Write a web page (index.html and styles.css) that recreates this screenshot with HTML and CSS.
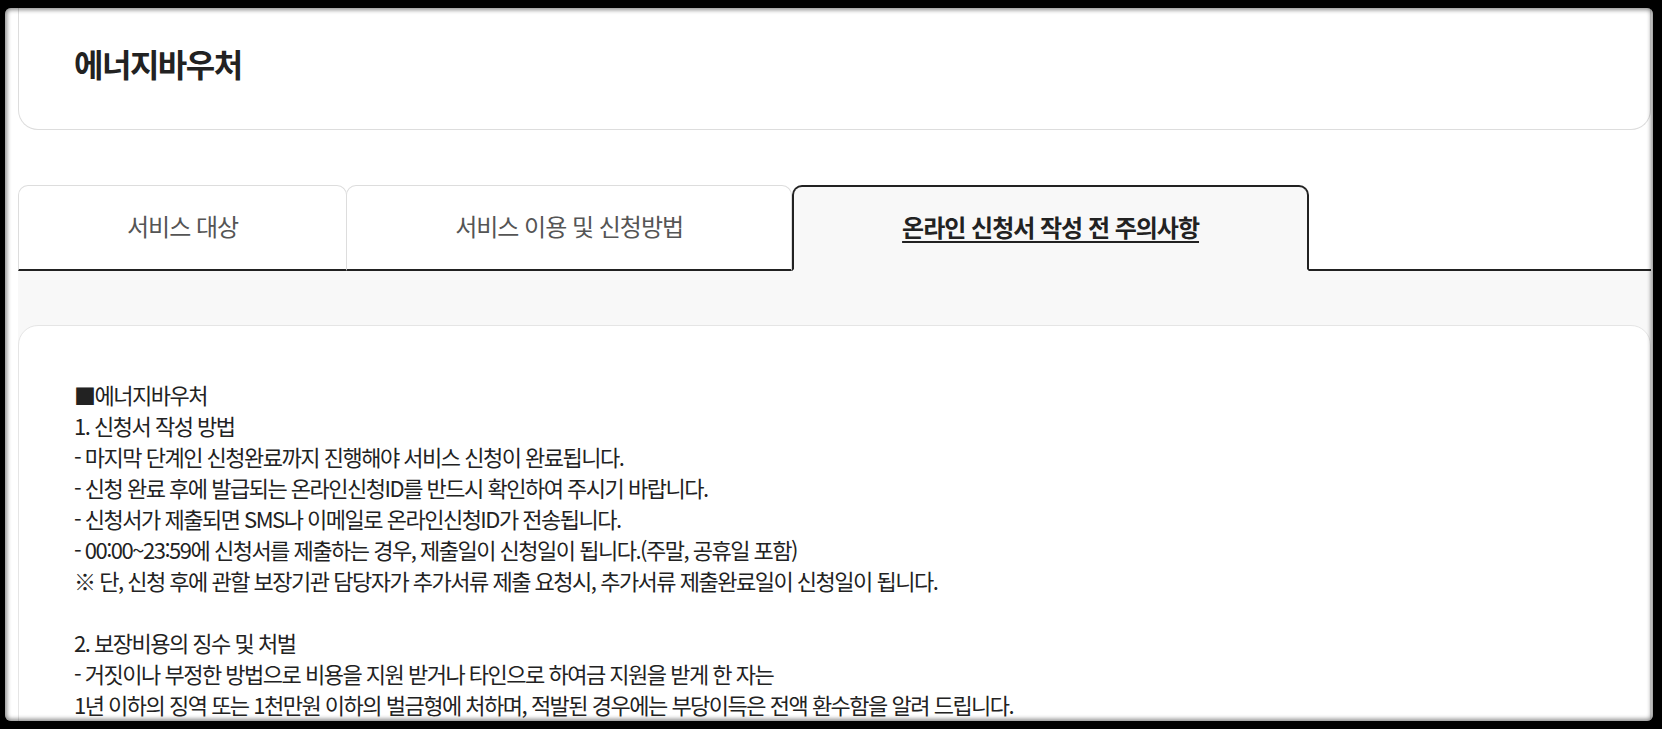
FILE: index.html
```html
<!DOCTYPE html>
<html lang="ko">
<head>
<meta charset="utf-8">
<title>에너지바우처</title>
<link rel="stylesheet" href="styles.css">
</head>
<body>
<div class="page">
  <header class="head-card">
    <h1 class="title">에너지바우처</h1>
  </header>

  <nav class="tabs">
    <div class="tab">서비스 대상</div>
    <div class="tab">서비스 이용 및 신청방법</div>
    <div class="tab active">온라인 신청서 작성 전 주의사항</div>
  </nav>

  <section class="panel">
    <div class="card">
      <p class="block">■에너지바우처<br>
1. 신청서 작성 방법<br>
- 마지막 단계인 신청완료까지 진행해야 서비스 신청이 완료됩니다.<br>
- 신청 완료 후에 발급되는 온라인신청ID를 반드시 확인하여 주시기 바랍니다.<br>
- 신청서가 제출되면 SMS나 이메일로 온라인신청ID가 전송됩니다.<br>
- 00:00~23:59에 신청서를 제출하는 경우, 제출일이 신청일이 됩니다.(주말, 공휴일 포함)<br>
※ 단, 신청 후에 관할 보장기관 담당자가 추가서류 제출 요청시, 추가서류 제출완료일이 신청일이 됩니다.</p>
      <p class="block">2. 보장비용의 징수 및 처벌<br>
- 거짓이나 부정한 방법으로 비용을 지원 받거나 타인으로 하여금 지원을 받게 한 자는<br>
1년 이하의 징역 또는 1천만원 이하의 벌금형에 처하며, 적발된 경우에는 부당이득은 전액 환수함을 알려 드립니다.</p>
    </div>
  </section>
</div>
<div class="frame"></div>
</body>
</html>
```

FILE: styles.css
```css
html, body {
  margin: 0;
  padding: 0;
  background: #fff;
}
body {
  font-family: "Noto Sans CJK KR", "Noto Sans", sans-serif;
  color: #222;
  overflow: hidden;
}
.page {
  padding: 0 11px 0 18px;
}
.head-card {
  box-sizing: border-box;
  height: 130px;
  border: 1px solid #ddd;
  border-top: none;
  border-radius: 0 0 20px 20px;
  display: flex;
  align-items: center;
  padding: 0 0 4px 55px;
}
.title {
  margin: 0;
  font-size: 32px;
  font-weight: 700;
  letter-spacing: -1.5px;
  color: #222;
}
.tabs {
  margin-top: 55px;
  display: flex;
  height: 84px;
  border-bottom: 2px solid #222;
}
.tab {
  box-sizing: border-box;
  height: 86px;
  margin-bottom: -2px;
  padding: 0 108px 4px;
  display: flex;
  align-items: center;
  justify-content: center;
  background: #fff;
  border: 1px solid #ddd;
  border-bottom: 2px solid #222;
  border-radius: 10px 10px 0 0;
  font-size: 24px;
  letter-spacing: -1px;
  color: #555;
  white-space: nowrap;
}
.tab + .tab {
  margin-left: -1px;
}
.tab.active {
  margin-left: 0;
  border: 2px solid #222;
  border-bottom: 2px solid #f8f8f8;
  background: #f8f8f8;
  color: #222;
  font-weight: 700;
  text-decoration: underline;
  text-decoration-thickness: 2px;
  text-underline-offset: 4px;
}
.panel {
  background: #f8f8f8;
  padding-top: 54px;
}
.card {
  background: #fff;
  border: 1px solid #e5e5e5;
  border-radius: 20px 20px 0 0;
  padding: 53px 55px 60px;
  font-size: 22px;
  line-height: 31px;
  letter-spacing: -1.5px;
  color: #222;
}
.block {
  margin: 0 0 31px;
}
.frame {
  position: fixed;
  top: 8px;
  left: 5px;
  right: 9px;
  bottom: 8px;
  border-radius: 6px;
  box-shadow: 0 0 0 60px #000, inset 0 0 4px 2px rgba(0, 0, 0, 0.45);
  pointer-events: none;
}
```
